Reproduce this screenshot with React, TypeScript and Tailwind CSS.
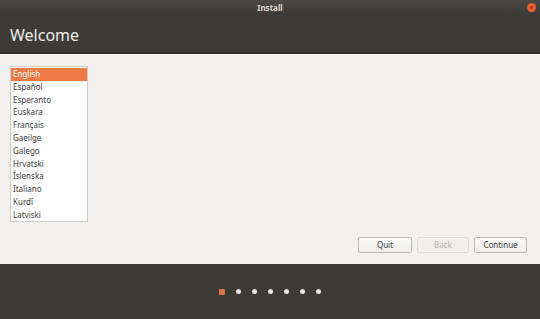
import React from 'react';

const languages = [
  'English',
  'Español',
  'Esperanto',
  'Euskara',
  'Français',
  'Gaeilge',
  'Galego',
  'Hrvatski',
  'Íslenska',
  'Italiano',
  'Kurdî',
  'Latviski',
];

const App: React.FC = () => {
  return (
    <div className="w-[540px] h-[319px] flex flex-col overflow-hidden font-['Noto_Sans','DejaVu_Sans',sans-serif]">
      {/* Title bar */}
      <div className="relative h-[16px] bg-gradient-to-b from-[#4b4a45] to-[#3a3935] flex items-center justify-center">
        <span className="text-[8px] font-bold text-[#dfdbd2] leading-none">Install</span>
        <div className="absolute right-[4px] top-[3px] w-[9px] h-[9px] rounded-full bg-[#e9602f] flex items-center justify-center">
          <div className="w-[3px] h-[3px] rounded-full bg-[#a63a14]" />
        </div>
      </div>

      {/* Header */}
      <div className="h-[38px] bg-[#3d3b37] border-b-2 border-[#2f2e2b] flex items-center px-[10px]">
        <span className="text-[16px] text-[#efede9] leading-none mt-[2px]">Welcome</span>
      </div>

      {/* Content */}
      <div className="flex-1 bg-[#f2f1f0] flex flex-col px-[10px] pt-[12px] pb-[11px]">
        <div className="w-[78px] h-[156px] bg-white border border-[#cfcdc9] pt-[1px] overflow-hidden">
          {languages.map((lang, i) => (
            <div
              key={lang}
              className={`h-[12.8px] px-[2px] text-[8px] leading-[12.8px] ${
                i === 0 ? 'bg-[#f07a46] text-white' : 'text-[#3c3c3c]'
              }`}
            >
              {lang}
            </div>
          ))}
        </div>
        <div className="flex-1" />
        <div className="flex justify-end gap-[5px] pr-[3px]">
          <button className="w-[54px] h-[16px] rounded-[2px] border border-[#bdbab4] bg-gradient-to-b from-[#fbfbfa] to-[#eeedeb] text-[8px] text-[#3c3c3c] leading-none">
            Quit
          </button>
          <button className="w-[52px] h-[16px] rounded-[2px] border border-[#dcdad6] bg-[#f0efed] text-[8px] text-[#b3b1ad] leading-none">
            Back
          </button>
          <button className="w-[53px] h-[16px] rounded-[2px] border border-[#bdbab4] bg-gradient-to-b from-[#fbfbfa] to-[#eeedeb] text-[8px] text-[#3c3c3c] leading-none">
            Continue
          </button>
        </div>
      </div>

      {/* Progress */}
      <div className="h-[55px] bg-[#3c3b37] flex items-center justify-center gap-[11px]">
        <div className="w-[6px] h-[6px] rounded-[1px] bg-[#d9733f]" />
        {[0, 1, 2, 3, 4, 5].map((d) => (
          <div key={d} className="w-[5px] h-[5px] rounded-full bg-[#e8e6e2]" />
        ))}
      </div>
    </div>
  );
};

export default App;
